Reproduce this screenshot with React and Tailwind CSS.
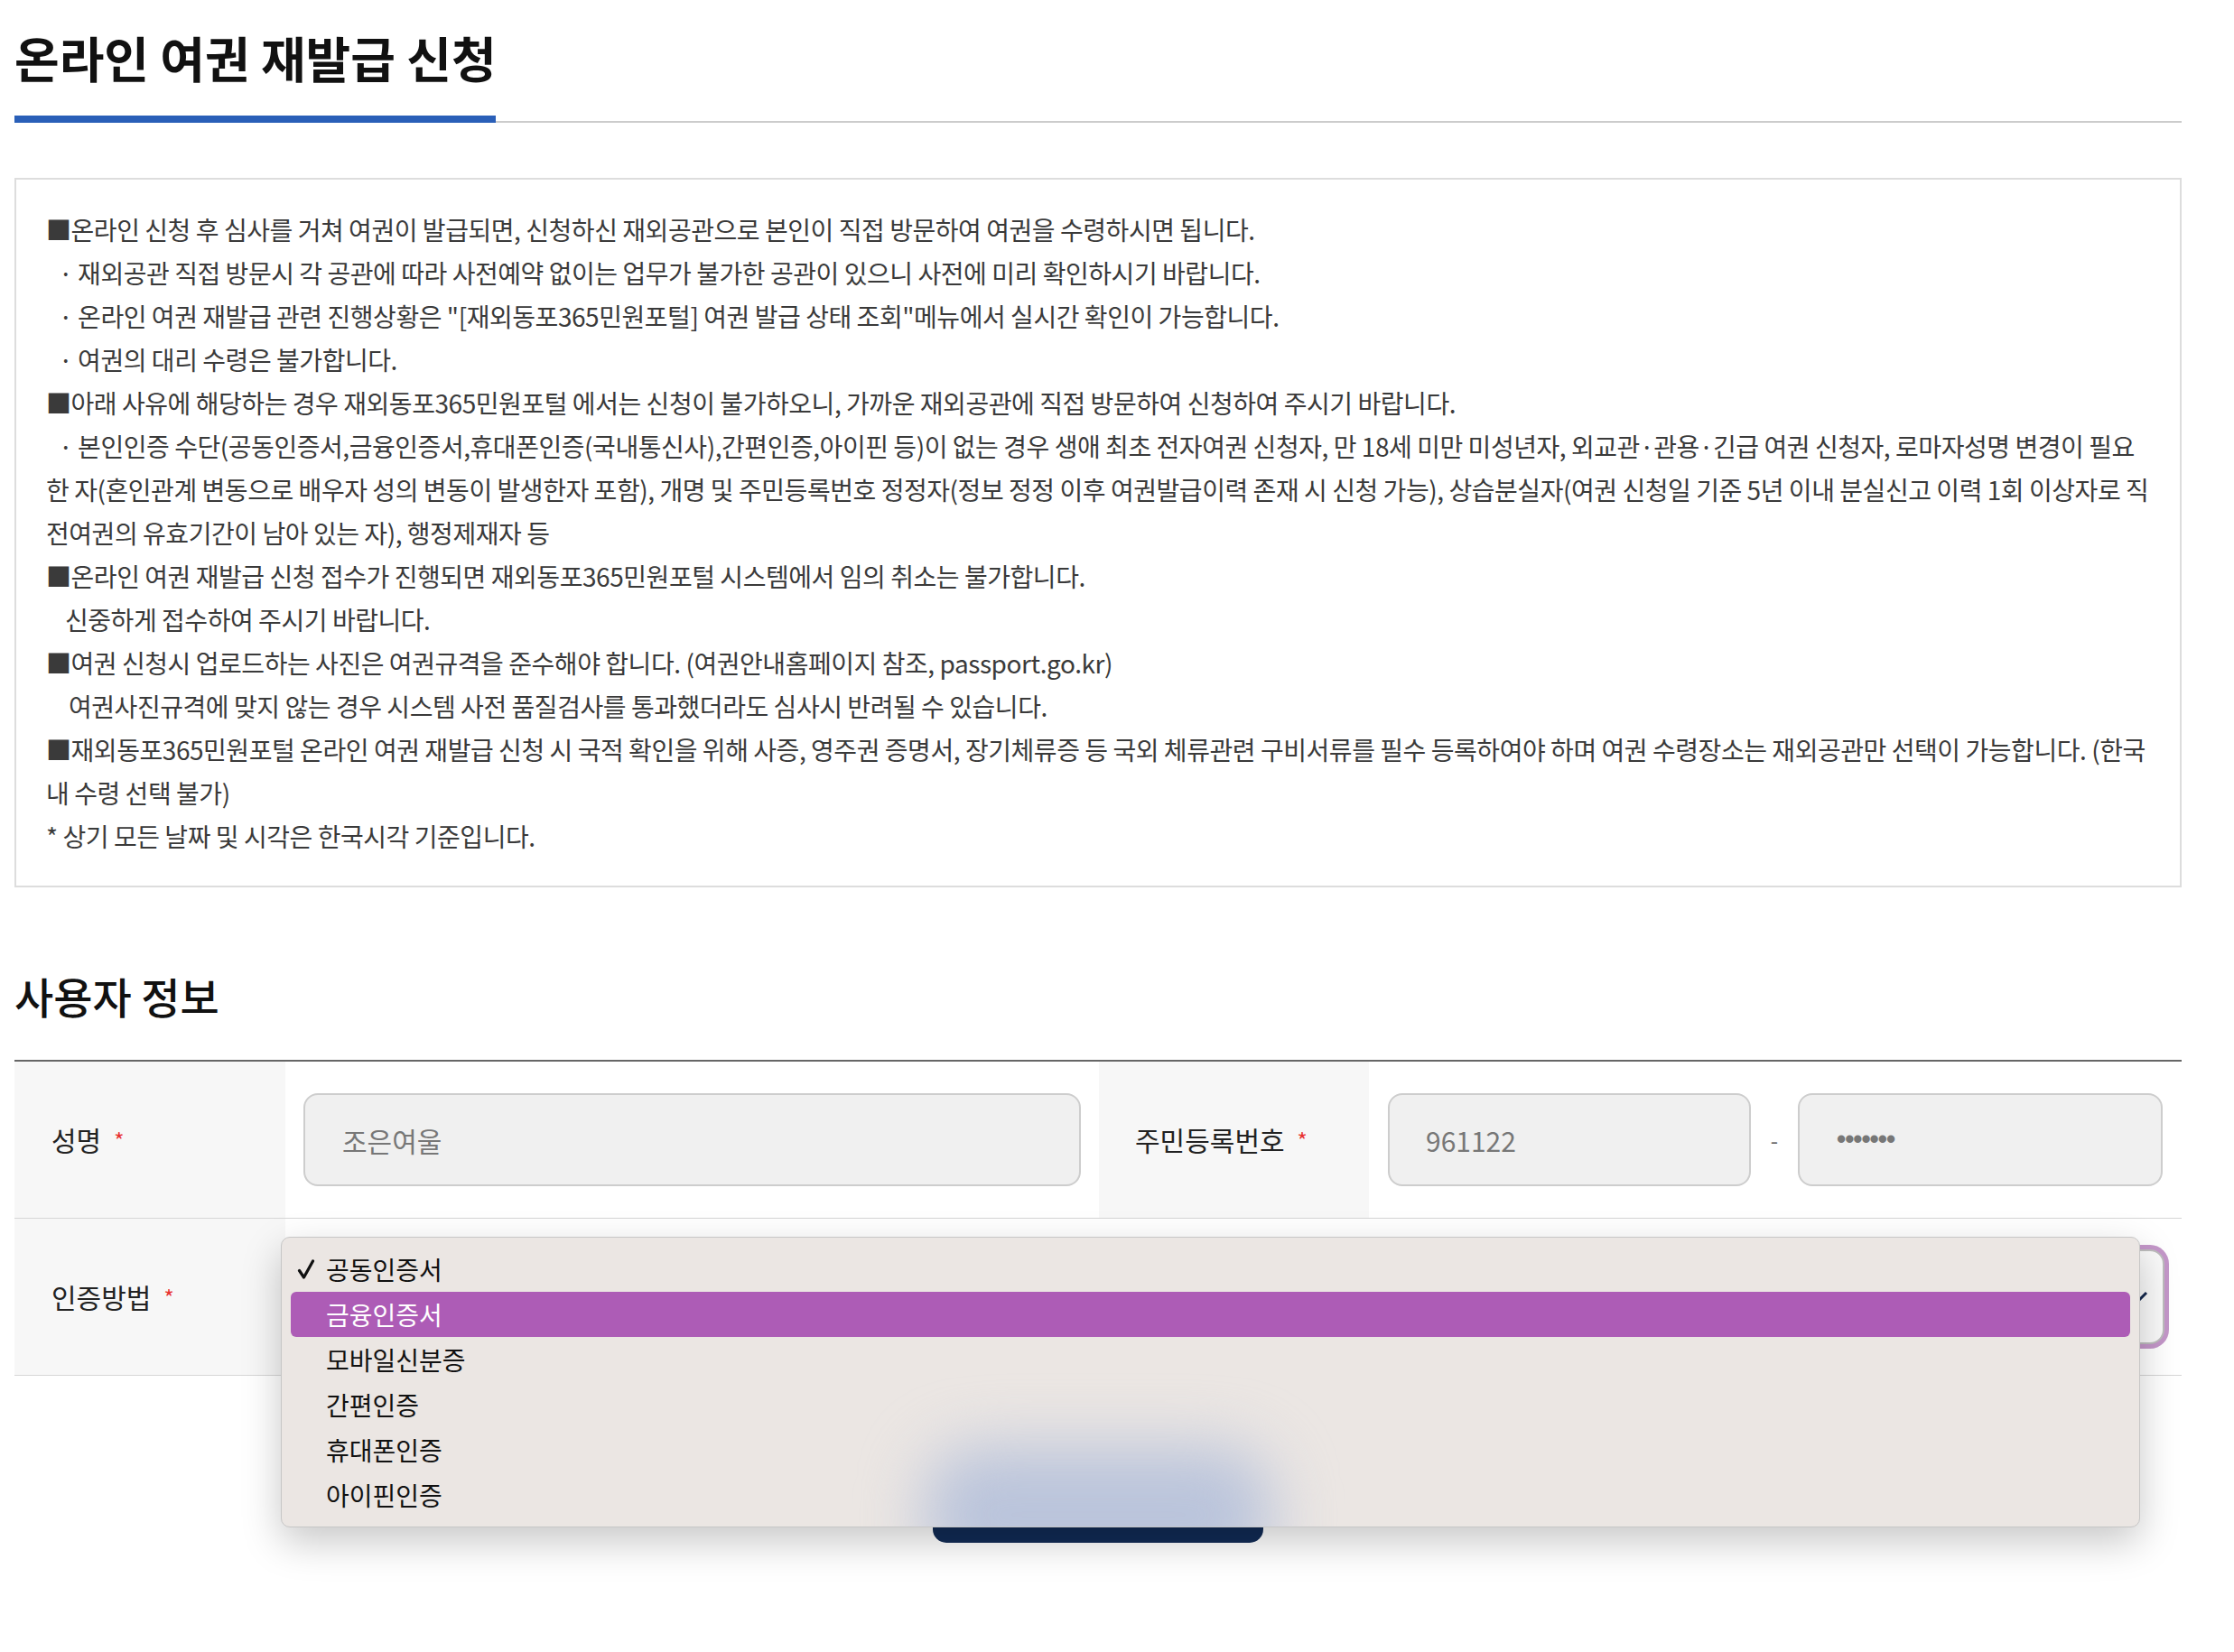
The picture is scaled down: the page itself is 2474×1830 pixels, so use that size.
import React from 'react';

const notices = [
  { text: '■온라인 신청 후 심사를 거쳐 여권이 발급되면, 신청하신 재외공관으로 본인이 직접 방문하여 여권을 수령하시면 됩니다.' },
  { text: '· 재외공관 직접 방문시 각 공관에 따라 사전예약 없이는 업무가 불가한 공관이 있으니 사전에 미리 확인하시기 바랍니다.', indent: 'pl-[14px]' },
  { text: '· 온라인 여권 재발급 관련 진행상황은 "[재외동포365민원포털] 여권 발급 상태 조회"메뉴에서 실시간 확인이 가능합니다.', indent: 'pl-[14px]' },
  { text: '· 여권의 대리 수령은 불가합니다.', indent: 'pl-[14px]' },
  { text: '■아래 사유에 해당하는 경우 재외동포365민원포털 에서는 신청이 불가하오니, 가까운 재외공관에 직접 방문하여 신청하여 주시기 바랍니다.' },
  { text: '· 본인인증 수단(공동인증서,금융인증서,휴대폰인증(국내통신사),간편인증,아이핀 등)이 없는 경우 생애 최초 전자여권 신청자, 만 18세 미만 미성년자, 외교관·관용·긴급 여권 신청자, 로마자성명 변경이 필요', indent: 'pl-[14px]' },
  { text: '한 자(혼인관계 변동으로 배우자 성의 변동이 발생한자 포함), 개명 및 주민등록번호 정정자(정보 정정 이후 여권발급이력 존재 시 신청 가능), 상습분실자(여권 신청일 기준 5년 이내 분실신고 이력 1회 이상자로 직' },
  { text: '전여권의 유효기간이 남아 있는 자), 행정제재자 등' },
  { text: '■온라인 여권 재발급 신청 접수가 진행되면 재외동포365민원포털 시스템에서 임의 취소는 불가합니다.' },
  { text: '신중하게 접수하여 주시기 바랍니다.', indent: 'pl-[21px]' },
  { text: '■여권 신청시 업로드하는 사진은 여권규격을 준수해야 합니다. (여권안내홈페이지 참조, passport.go.kr)' },
  { text: '여권사진규격에 맞지 않는 경우 시스템 사전 품질검사를 통과했더라도 심사시 반려될 수 있습니다.', indent: 'pl-[25px]' },
  { text: '■재외동포365민원포털 온라인 여권 재발급 신청 시 국적 확인을 위해 사증, 영주권 증명서, 장기체류증 등 국외 체류관련 구비서류를 필수 등록하여야 하며 여권 수령장소는 재외공관만 선택이 가능합니다. (한국' },
  { text: '내 수령 선택 불가)' },
  { text: '* 상기 모든 날짜 및 시각은 한국시각 기준입니다.' },
];

const authOptions = ['공동인증서', '금융인증서', '모바일신분증', '간편인증', '휴대폰인증', '아이핀인증'];

const Label = ({ children }) => (
  <div className="flex items-center text-[30px] text-[#222]">
    <span>{children}</span>
    <span className="ml-[14px] text-[24px] text-[#e8322f]">*</span>
  </div>
);

const App = () => {
  return (
    <div className="min-h-screen bg-white font-['Noto_Sans_CJK_KR','Noto_Sans',sans-serif] text-[#222]">
      <div className="ml-[16px] w-[2400px]">
        {/* Page title */}
        <h1 className="pt-[31px] text-[54px] leading-[66px] font-bold text-[#111]">온라인 여권 재발급 신청</h1>
        <div className="mt-[31px] flex items-end">
          <div className="w-[533px] h-[8px] bg-[#2a5fb8]" />
          <div className="flex-1 h-[2px] bg-[#cccccc]" />
        </div>

        {/* Notice box */}
        <div className="mt-[61px] border-2 border-[#dddddd] px-[33px] py-[31px] text-[28px] leading-[48px] tracking-[-0.45px] text-[#3a3a3a]">
          {notices.map((n, i) => (
            <div key={i} className={`whitespace-nowrap ${n.indent || ''}`}>{n.text}</div>
          ))}
        </div>

        {/* User info */}
        <h2 className="mt-[91px] text-[47px] leading-[58px] font-medium text-[#111]">사용자 정보</h2>
        <div className="mt-[42px] border-t-2 border-[#666666]">
          <div className="flex h-[174px] border-b border-[#d6d6d6]">
            <div className="w-[300px] bg-[#f7f7f7] pl-[41px] flex items-center">
              <Label>성명</Label>
            </div>
            <div className="w-[901px] px-[20px] flex items-center">
              <input
                readOnly
                value="조은여울"
                className="w-full h-[103px] rounded-[16px] border-2 border-[#cdcdcd] bg-[#f0f0f0] px-[41px] text-[30px] text-[#777] outline-none"
              />
            </div>
            <div className="w-[299px] bg-[#f7f7f7] pl-[40px] flex items-center">
              <Label>주민등록번호</Label>
            </div>
            <div className="flex-1 pl-[21px] pr-[21px] flex items-center">
              <input
                readOnly
                value="961122"
                className="w-[402px] h-[103px] rounded-[16px] border-2 border-[#cdcdcd] bg-[#f0f0f0] px-[40px] text-[30px] text-[#777] outline-none"
              />
              <span className="w-[52px] text-center text-[24px] text-[#666]">-</span>
              <div className="w-[404px] h-[103px] rounded-[16px] border-2 border-[#cdcdcd] bg-[#f0f0f0] px-[41px] flex items-center">
                <span className="font-['Liberation_Sans',sans-serif] text-[29px] font-bold tracking-[-1px] text-[#777]">•••••••</span>
              </div>
            </div>
          </div>

          <div className="flex h-[174px] border-b border-[#d6d6d6]">
            <div className="w-[300px] bg-[#f7f7f7] pl-[41px] flex items-center">
              <Label>인증방법</Label>
            </div>
            <div className="flex-1 pl-[20px] pr-[19px] flex items-center">
              <div className="relative w-full">
                <div className="h-[105px] rounded-[16px] border-2 border-[#bdbdbd] bg-[#fafafa] ring-[5px] ring-[#c497c9] pr-[16px] flex items-center justify-end">
                  <svg width="24" height="14" viewBox="0 0 24 14">
                    <path d="M2 2l10 10 10-10" fill="none" stroke="#14284d" strokeWidth="3" />
                  </svg>
                </div>

                <div className="absolute left-[-25px] top-[-14px] z-10 w-[2059px] rounded-[10px] border border-[#c6c6c6] bg-[#ebe6e3] py-[10px] shadow-[0_16px_44px_rgba(0,0,0,0.22)] overflow-hidden">
                  <div className="absolute left-[712px] top-[232px] w-[385px] h-[150px] rounded-[60px] bg-[#bac4db] blur-[34px]" />
                  {authOptions.map((opt, i) => (
                    <div
                      key={opt}
                      className={`relative mx-[10px] h-[50px] rounded-[6px] flex items-center text-[28px] ${i === 1 ? 'bg-[#ad5cb6] text-white' : 'text-[#111]'}`}
                    >
                      <span className="w-[39px] pl-[7px] flex items-center">
                        {i === 0 && (
                          <svg width="20" height="22" viewBox="0 0 20 22">
                            <path d="M2.5 12.5l5 7.5L17.5 2" fill="none" stroke="#111" strokeWidth="3.2" strokeLinecap="round" strokeLinejoin="round" />
                          </svg>
                        )}
                      </span>
                      <span>{opt}</span>
                    </div>
                  ))}
                </div>
              </div>
            </div>
          </div>
        </div>

        <div className="mt-[85px] mx-auto w-[366px] h-[100px] rounded-[15px] bg-[#112b55]" />
      </div>
    </div>
  );
};

export default App;
